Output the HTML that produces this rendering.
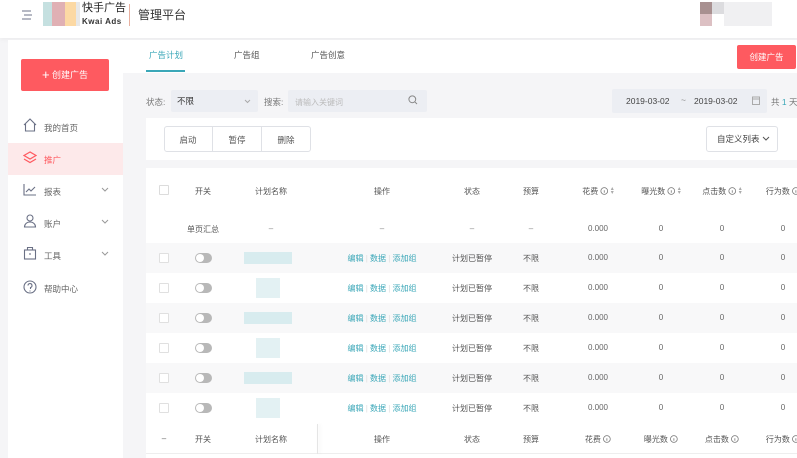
<!DOCTYPE html>
<html><head><meta charset="utf-8">
<style>
*{margin:0;padding:0;box-sizing:border-box}
body{width:797px;height:458px;overflow:hidden;background:#f5f5f7;font-family:"Liberation Sans","Noto Sans CJK SC",sans-serif;position:relative;color:#555}
.a{position:absolute;white-space:nowrap}
.c{position:absolute;transform:translateX(-50%);white-space:nowrap}
.t{font-size:8px;color:#555}
.blue{color:#3aa7b8}
</style></head><body>
<div class="a" style="left:0;top:0;width:797px;height:38px;background:#fff;box-shadow:0 2px 4px rgba(0,0,0,.04)"></div>
<svg class="a" style="left:21px;top:9px" width="12" height="12" viewBox="0 0 12 12"><path d="M1 2h9M3 6h8M1 10h9" stroke="#8a8fa0" stroke-width="1.2"/></svg>
<div class="a" style="left:43px;top:2px;width:9px;height:24px;background:#c5e0e0"></div>
<div class="a" style="left:52px;top:2px;width:13px;height:24px;background:#e0b0b4"></div>
<div class="a" style="left:65px;top:2px;width:11px;height:24px;background:#fcd9a4"></div>
<div class="a" style="left:76px;top:2px;width:4px;height:24px;background:#e8e8e8"></div>
<div class="a" style="left:82px;top:2px;font-size:11px;line-height:13px;color:#222">快手广告</div>
<div class="a" style="left:82px;top:17px;font-size:8px;line-height:9px;font-weight:bold;color:#333;letter-spacing:.5px">Kwai Ads</div>
<div class="a" style="left:129px;top:4px;width:1px;height:22px;background:#e8b0a0"></div>
<div class="a" style="left:138px;top:6px;font-size:12px;color:#333">管理平台</div>
<div class="a" style="left:700px;top:2px;width:12px;height:12px;background:#a89090"></div>
<div class="a" style="left:712px;top:2px;width:12px;height:12px;background:#dcdcdf"></div>
<div class="a" style="left:724px;top:2px;width:48px;height:24px;background:#f0f0f2"></div>
<div class="a" style="left:700px;top:14px;width:12px;height:12px;background:#dcc0c3"></div>
<div class="a" style="left:8px;top:40px;width:115px;height:418px;background:#fff"></div>
<div class="a" style="left:21px;top:59px;width:88px;height:32px;background:#fe5a60;border-radius:2px;color:#fff;font-size:9px;text-align:center;line-height:32px"><span style="font-size:13px;vertical-align:-1px">+</span> 创建广告</div>
<svg class="a" style="left:23px;top:118px" width="14" height="14" viewBox="0 0 14 14"><path d="M1 7L7 1l6 6M2.5 6v7h9V6" fill="none" stroke="#6a7085" stroke-width="1.1"/></svg>
<div class="a t" style="left:44px;top:122px;font-size:8.5px;color:#666">我的首页</div>
<div class="a" style="left:8px;top:143px;width:115px;height:32px;background:#fde9ea"></div>
<svg class="a" style="left:23px;top:151px" width="14" height="14" viewBox="0 0 14 14"><path d="M7 1L1 4.5 7 8l6-3.5zM1 8l6 3.5L13 8" fill="none" stroke="#fe5a60" stroke-width="1.2"/></svg>
<div class="a t" style="left:44px;top:154px;font-size:8.5px;color:#fe5a60">推广</div>
<svg class="a" style="left:23px;top:183px" width="14" height="13" viewBox="0 0 14 13"><path d="M1 1v11h12M3 9l3-3 2 2 4-4" fill="none" stroke="#6a7085" stroke-width="1.1"/></svg>
<div class="a t" style="left:44px;top:186px;font-size:8.5px;color:#666">报表</div>
<svg class="a" style="left:101px;top:187px" width="8" height="6" viewBox="0 0 8 6"><path d="M1 1l3 3 3-3" fill="none" stroke="#999"/></svg>
<svg class="a" style="left:23px;top:214px" width="14" height="14" viewBox="0 0 14 14"><circle cx="7" cy="4" r="3" fill="none" stroke="#6a7085" stroke-width="1.1"/><path d="M1.5 13c0-3 2.5-5 5.5-5s5.5 2 5.5 5z" fill="none" stroke="#6a7085" stroke-width="1.1"/></svg>
<div class="a t" style="left:44px;top:218px;font-size:8.5px;color:#666">账户</div>
<svg class="a" style="left:101px;top:219px" width="8" height="6" viewBox="0 0 8 6"><path d="M1 1l3 3 3-3" fill="none" stroke="#999"/></svg>
<svg class="a" style="left:23px;top:246px" width="14" height="14" viewBox="0 0 14 14"><rect x="1.5" y="4" width="11" height="9" fill="none" stroke="#6a7085" stroke-width="1.1"/><path d="M4.5 4V1.5h5V4M7 7v2" fill="none" stroke="#6a7085" stroke-width="1.1"/></svg>
<div class="a t" style="left:44px;top:250px;font-size:8.5px;color:#666">工具</div>
<svg class="a" style="left:101px;top:251px" width="8" height="6" viewBox="0 0 8 6"><path d="M1 1l3 3 3-3" fill="none" stroke="#999"/></svg>
<svg class="a" style="left:23px;top:280px" width="14" height="14" viewBox="0 0 14 14"><circle cx="7" cy="7" r="6" fill="none" stroke="#6a7085" stroke-width="1.1"/><path d="M5 5.5a2 2 0 1 1 2.5 2V9M7 10.5v1" fill="none" stroke="#6a7085" stroke-width="1.1"/></svg>
<div class="a t" style="left:44px;top:283px;font-size:8.5px;color:#666">帮助中心</div>
<div class="a" style="left:123px;top:40px;width:674px;height:33px;background:#fff"></div>
<div class="a" style="left:149px;top:49px;font-size:8.5px;color:#3aa7b8">广告计划</div>
<div class="a" style="left:146px;top:70px;width:39px;height:2px;background:#3aa7b8"></div>
<div class="a" style="left:234px;top:49px;font-size:8.5px;color:#555">广告组</div>
<div class="a" style="left:311px;top:49px;font-size:8.5px;color:#555">广告创意</div>
<div class="a" style="left:737px;top:45px;width:59px;height:24px;background:#fe5a60;border-radius:2px;color:#fff;font-size:8.5px;text-align:center;line-height:24px">创建广告</div>
<div class="a" style="left:146px;top:96px;font-size:8.5px;color:#777">状态:</div>
<div class="a" style="left:171px;top:90px;width:87px;height:22px;background:#eceef3;border-radius:2px"></div>
<div class="a" style="left:177px;top:95px;font-size:8.5px;color:#333">不限</div>
<svg class="a" style="left:244px;top:99px" width="7" height="5" viewBox="0 0 7 5"><path d="M1 1l2.5 2.5L6 1" fill="none" stroke="#aaa"/></svg>
<div class="a" style="left:264px;top:96px;font-size:8.5px;color:#777">搜索:</div>
<div class="a" style="left:288px;top:90px;width:139px;height:22px;background:#eceef3;border-radius:2px"></div>
<div class="a" style="left:295px;top:97px;font-size:8px;color:#bbb">请输入关键词</div>
<svg class="a" style="left:408px;top:95px" width="10" height="10" viewBox="0 0 10 10"><circle cx="4.3" cy="4.3" r="3.4" fill="none" stroke="#888"/><path d="M6.8 6.8L9 9" stroke="#888"/></svg>
<div class="a" style="left:612px;top:89px;width:155px;height:24px;background:#eceef3;border-radius:2px"></div>
<div class="a" style="left:626px;top:96px;font-size:8.5px;color:#444">2019-03-02</div>
<div class="a" style="left:681px;top:95px;font-size:8.5px;color:#888">~</div>
<div class="a" style="left:694px;top:96px;font-size:8.5px;color:#444">2019-03-02</div>
<svg class="a" style="left:752px;top:96px" width="8" height="9" viewBox="0 0 8 9"><rect x=".5" y="1" width="7" height="7.5" fill="none" stroke="#aaa"/><path d="M.5 3h7" stroke="#aaa"/></svg>
<div class="a" style="left:771px;top:96px;font-size:8.5px;color:#777">共 <span class="blue">1</span> 天</div>
<div class="a" style="left:146px;top:118px;width:651px;height:42px;background:#fff"></div>
<div class="a" style="left:164px;top:126px;width:147px;height:26px;border:1px solid #dfe1e6;border-radius:3px;background:#fff"></div>
<div class="a" style="left:212px;top:127px;width:1px;height:24px;background:#dfe1e6"></div>
<div class="a" style="left:261px;top:127px;width:1px;height:24px;background:#dfe1e6"></div>
<div class="c" style="left:188px;top:134px;font-size:8.5px;color:#555">启动</div>
<div class="c" style="left:237px;top:134px;font-size:8.5px;color:#555">暂停</div>
<div class="c" style="left:286px;top:134px;font-size:8.5px;color:#555">删除</div>
<div class="a" style="left:706px;top:126px;width:72px;height:26px;border:1px solid #dfe1e6;border-radius:3px;background:#fff;font-size:8.5px;color:#444;line-height:24px;padding-left:10px">自定义列表 <svg width="8" height="6" viewBox="0 0 8 6"><path d="M1 1l3 3 3-3" fill="none" stroke="#555"/></svg></div>
<div class="a" style="left:146px;top:168px;width:651px;height:290px;background:#fff"></div>
<div id="tb"></div>
<script>
var h='';
var cols={cb:164,sw:203,nm:271,op:382,st:472,bd:531,cost:598,imp:661,clk:722,act:783};
function txt(x,y,s,ex){h+='<div class="c" style="left:'+x+'px;top:'+y+'px;font-size:8px;'+(ex||'color:#555')+'">'+s+'</div>';}
var info='<svg width="8" height="8" viewBox="0 0 8 8" style="vertical-align:-1px"><circle cx="4" cy="4" r="3.4" fill="none" stroke="#777" stroke-width=".8"/><path d="M4 3.3v2.5" stroke="#777" stroke-width=".8"/></svg>';
var sort=' <span style="font-size:6px;color:#aaa;display:inline-block;line-height:4px;vertical-align:0">▴<br>▾</span>';
h+='<div class="a" style="left:159px;top:185px;width:10px;height:10px;border:1px solid #dcdcdc;border-radius:1px"></div>';
txt(cols.sw,186,'开关');txt(cols.nm,186,'计划名称');txt(cols.op,186,'操作');txt(cols.st,186,'状态');txt(cols.bd,186,'预算');
txt(cols.cost,186,'花费 '+info+sort);txt(cols.imp,186,'曝光数 '+info+sort);txt(cols.clk,186,'点击数 '+info+sort);txt(cols.act,186,'行为数 '+info);
txt(cols.sw,224,'单页汇总');txt(cols.nm,224,'–','color:#888');txt(cols.op,224,'–','color:#888');txt(cols.st,224,'–','color:#888');txt(cols.bd,224,'–','color:#888');
txt(cols.cost,224,'0.000','color:#666');txt(cols.imp,224,'0','color:#666');txt(cols.clk,224,'0','color:#666');txt(cols.act,224,'0','color:#666');
for(var i=0;i<6;i++){
 var y=243+i*30;
 if(i%2==0)h+='<div class="a" style="left:146px;top:'+y+'px;width:651px;height:30px;background:#f8f8f9"></div>';
 var cy=y+15;
 h+='<div class="a" style="left:159px;top:'+(cy-5)+'px;width:10px;height:10px;border:1px solid #e0e0e0;border-radius:1px;background:#fff"></div>';
 h+='<div class="a" style="left:195px;top:'+(cy-5)+'px;width:17px;height:10px;border-radius:5px;background:#b8b8b8"><div style="position:absolute;left:1px;top:1px;width:8px;height:8px;border-radius:4px;background:#fff"></div></div>';
 if(i%2==0) h+='<div class="a" style="left:244px;top:'+(cy-6)+'px;width:48px;height:12px;background:#d8ecef"></div>';
 else h+='<div class="a" style="left:256px;top:'+(cy-10)+'px;width:24px;height:20px;background:#e3f1f3"></div>';
 txt(cols.op,cy-5,'编辑 <span style="color:#ddd">|</span> 数据 <span style="color:#ddd">|</span> 添加组','color:#3aa7b8');
 txt(cols.st,cy-5,'计划已暂停');txt(cols.bd,cy-5,'不限');txt(cols.cost,cy-5,'0.000','color:#666');txt(cols.imp,cy-5,'0','color:#666');txt(cols.clk,cy-5,'0','color:#666');txt(cols.act,cy-5,'0','color:#666');
}
h+='<div class="a" style="left:146px;top:424px;width:651px;height:30px;background:#fff;border-bottom:1px solid #eee"></div>';
h+='<div class="a" style="left:317px;top:424px;width:1px;height:30px;background:#e5e5e5;box-shadow:2px 0 3px rgba(0,0,0,.08)"></div>';
txt(cols.cb,434,'–','color:#666');txt(cols.sw,434,'开关');txt(cols.nm,434,'计划名称');txt(cols.op,434,'操作');txt(cols.st,434,'状态');txt(cols.bd,434,'预算');
txt(cols.cost,434,'花费 '+info);txt(cols.imp,434,'曝光数 '+info);txt(cols.clk,434,'点击数 '+info);txt(cols.act,434,'行为数 '+info);
document.getElementById('tb').innerHTML=h;
</script>
</body></html>
